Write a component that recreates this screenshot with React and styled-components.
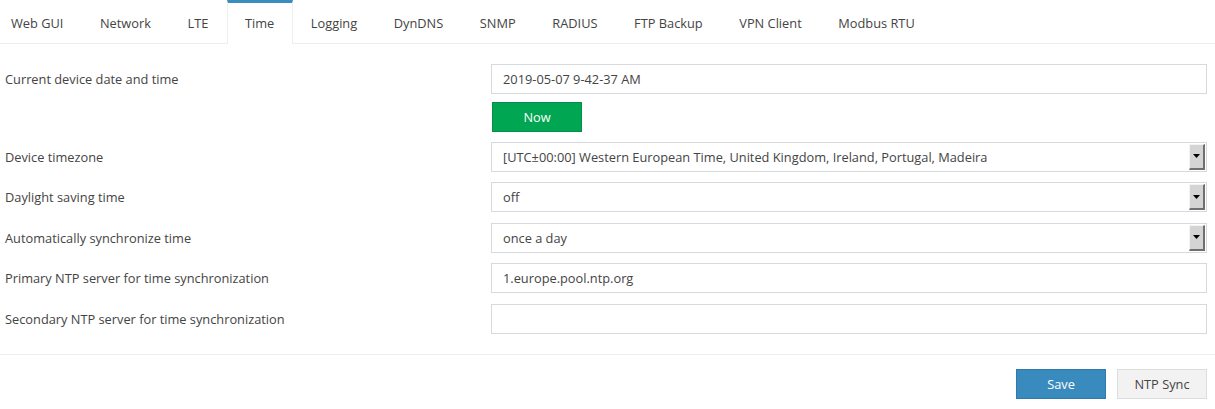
import styled, { createGlobalStyle } from 'styled-components';
import { useState } from 'react';

const tabs = ['Web GUI', 'Network', 'LTE', 'Time', 'Logging', 'DynDNS', 'SNMP', 'RADIUS', 'FTP Backup', 'VPN Client', 'Modbus RTU'];

const GlobalStyle = createGlobalStyle`
  body {
    margin: 0;
    background: #fff;
    font-family: "Open Sans", "Noto Sans", sans-serif;
    font-size: 12.8px;
    color: #444;
  }
`;

const App = () => {
  const [tab, setTab] = useState(3);

  return (
    <Page>
      <GlobalStyle />
      <TabBar>
        {tabs.map((name, index) => (
          <Tab key={name} $active={index === tab} onClick={() => setTab(index)}>{name}</Tab>
        ))}
      </TabBar>
      <Form>
        <Label>Current device date and time</Label>
        <Field>
          <Input defaultValue="2019-05-07 9-42-37 AM" />
          <NowButton>Now</NowButton>
        </Field>

        <Label>Device timezone</Label>
        <Select value="[UTC±00:00] Western European Time, United Kingdom, Ireland, Portugal, Madeira" />

        <Label>Daylight saving time</Label>
        <Select value="off" />

        <Label>Automatically synchronize time</Label>
        <Select value="once a day" />

        <Label>Primary NTP server for time synchronization</Label>
        <Input defaultValue="1.europe.pool.ntp.org" />

        <Label>Secondary NTP server for time synchronization</Label>
        <Input defaultValue="" />
      </Form>
      <Footer>
        <Button $primary>Save</Button>
        <Button>NTP Sync</Button>
      </Footer>
    </Page>
  );
}

const Select = ({ value }) => (
  <SelectBox>
    <span>{value}</span>
    <Arrow>
      <svg width="7" height="4" viewBox="0 0 7 4"><path d="M0 0h7L3.5 4z" fill="#000" /></svg>
    </Arrow>
  </SelectBox>
);

export default App;

const Page = styled.div`
  width: 1215px;
  height: 409px;
  overflow: hidden;
`;

const TabBar = styled.div`
  display: flex;
  align-items: flex-start;
  height: 43px;
  border-bottom: 1px solid #eee;
`;

const Tab = styled.div`
  display: flex;
  align-items: center;
  padding: 0 17.3px 2px;
  height: 44px;
  box-sizing: border-box;
  cursor: pointer;
  color: #444;
  border: 1px solid ${p => (p.$active ? '#eee' : 'transparent')};
  border-top: 3px solid ${p => (p.$active ? '#3b8dbd' : 'transparent')};
  border-bottom: none;
  background: ${p => (p.$active ? '#fff' : 'transparent')};
  position: relative;
  z-index: ${p => (p.$active ? 1 : 0)};

  &:first-child {
    padding-left: 10px;
  }
`;

const Form = styled.div`
  display: grid;
  grid-template-columns: 486px 1fr;
  row-gap: 10.5px;
  align-items: start;
  padding: 20px 8px 20px 5px;
  border-bottom: 1px solid #eee;
`;

const Label = styled.div`
  line-height: 30px;
`;

const Field = styled.div`
  display: flex;
  flex-direction: column;
  gap: 8px;
  align-items: flex-start;
  margin-bottom: -1px;
`;

const Input = styled.input`
  box-sizing: border-box;
  width: 100%;
  height: 30px;
  border: 1px solid #d6d9de;
  padding: 0 11px;
  font: inherit;
  color: #444;
  outline: none;
`;

const SelectBox = styled.div`
  position: relative;
  box-sizing: border-box;
  height: 30px;
  border: 1px solid #d6d9de;
  display: flex;
  align-items: center;
  padding: 0 11px;
  color: #444;
`;

const Arrow = styled.div`
  position: absolute;
  right: 1px;
  top: 1px;
  bottom: 1px;
  width: 16px;
  box-sizing: border-box;
  background: #d4d4d4;
  border-top: 1px solid #f4f4f4;
  border-left: 1px solid #f4f4f4;
  border-right: 2px solid #6f6f6f;
  border-bottom: 2px solid #6f6f6f;
  display: flex;
  align-items: center;
  justify-content: center;
`;

const NowButton = styled.button`
  width: 90px;
  height: 30px;
  background: #00a651;
  border: 1px solid #04904a;
  color: #fff;
  font: inherit;
  margin-left: 1px;
`;

const Footer = styled.div`
  display: flex;
  justify-content: flex-end;
  gap: 11px;
  padding: 14px 8px 0 0;
`;

const Button = styled.button`
  width: 90px;
  height: 30px;
  font: inherit;
  color: ${p => (p.$primary ? '#fff' : '#444')};
  background: ${p => (p.$primary ? '#3a8bbd' : '#f2f2f2')};
  border: 1px solid ${p => (p.$primary ? '#2f7aa8' : '#ddd')};
`;
